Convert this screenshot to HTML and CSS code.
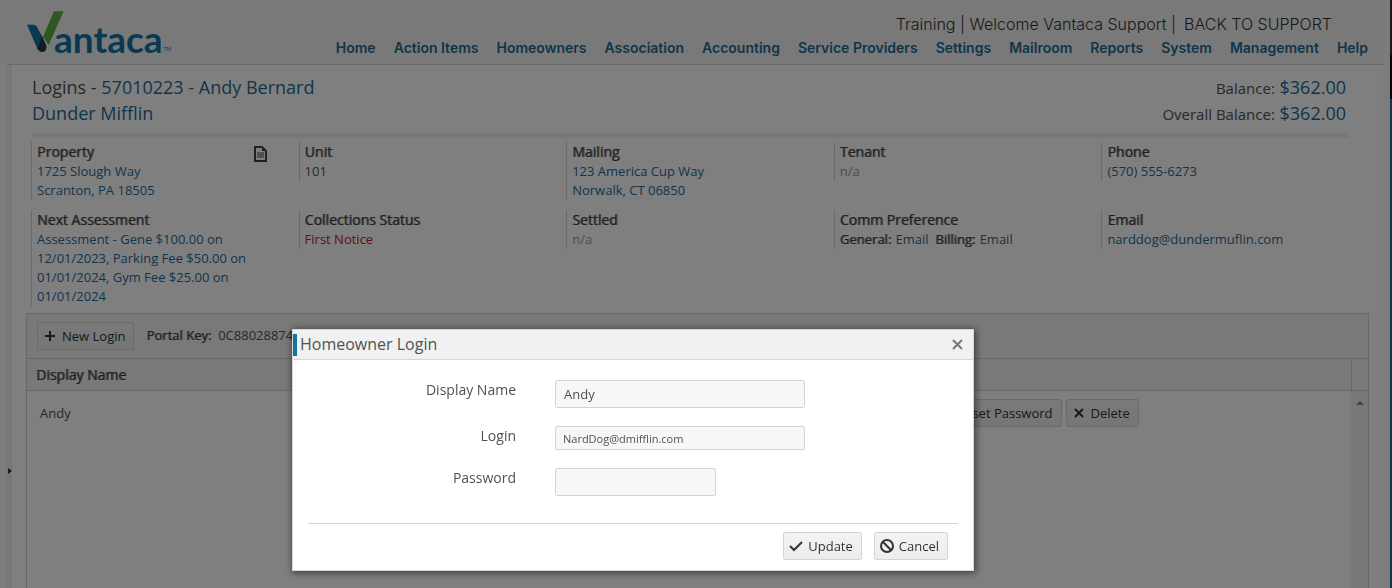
FILE: index.html
```html
<!DOCTYPE html>
<html lang="en">
<head>
<meta charset="utf-8">
<title>Vantaca - Logins</title>
<link rel="stylesheet" href="styles.css">
</head>
<body>
<div class="app">
  <div class="main">
    <header class="header">
      <a class="logo" href="#" aria-label="Vantaca">
        <svg class="logo-mark" viewBox="80 35 110 125" aria-hidden="true">
          <path d="M160 36H189L144 137L128 112Z" fill="#5eae42"/>
          <path d="M80 76H100Q106 76 109 82L126 112L112 150Z" fill="#1273a5"/>
          <path d="M125 110L137 137Q141 157 125 157Q115 157 111 146Z" fill="#1c384c"/>
        </svg>
        <span class="logo-text">antaca</span><span class="logo-tm">TM</span>
      </a>
      <div class="header-right">
        <div class="user-bar"><span>Training | Welcome Vantaca Support |</span><a href="#">BACK TO SUPPORT</a></div>
        <nav class="nav">
          <a href="#">Home</a><a href="#">Action Items</a><a href="#">Homeowners</a><a href="#">Association</a><a href="#">Accounting</a><a href="#">Service Providers</a><a href="#">Settings</a><a href="#">Mailroom</a><a href="#">Reports</a><a href="#">System</a><a href="#">Management</a><a href="#">Help</a>
        </nav>
      </div>
    </header>
    <div class="workspace">
      <div class="splitter"><svg viewBox="0 0 4 6" aria-hidden="true"><path d="M0 0L4 3L0 6Z"/></svg></div>
      <main class="content">
        <section class="summary">
          <div class="title">
            <div>Logins - <a href="#">57010223 - Andy Bernard</a></div>
            <div><a href="#">Dunder Mifflin</a></div>
          </div>
          <div class="balances">
            <div><span>Balance:</span> <a href="#">$362.00</a></div>
            <div><span>Overall Balance:</span> <a href="#">$362.00</a></div>
          </div>
        </section>
        <section class="facts">
          <div class="fact"><h2>Property <svg class="doc" viewBox="0 0 13 16" aria-hidden="true"><path d="M1 1H8L12 5V15H1Z" fill="none" stroke="currentColor" stroke-width="2"/><path d="M8 1V5H12Z" fill="currentColor"/><path d="M3 7H10M3 9H10M3 11H10" stroke="currentColor"/></svg></h2><a href="#">1725 Slough Way<br>Scranton, PA 18505</a></div>
          <div class="fact"><h2>Unit</h2>101</div>
          <div class="fact"><h2>Mailing</h2><a href="#">123 America Cup Way<br>Norwalk, CT 06850</a></div>
          <div class="fact"><h2>Tenant</h2><span class="muted">n/a</span></div>
          <div class="fact"><h2>Phone</h2><a href="#">(570) 555-6273</a></div>
          <div class="fact"><h2>Next Assessment</h2><a href="#">Assessment - Gene $100.00 on 12/01/2023, Parking Fee $50.00 on 01/01/2024, Gym Fee $25.00 on 01/01/2024</a></div>
          <div class="fact"><h2>Collections Status</h2><span class="alert">First Notice</span></div>
          <div class="fact"><h2>Settled</h2><span class="muted">n/a</span></div>
          <div class="fact"><h2>Comm Preference</h2><b>General:</b> <a href="#">Email</a> &nbsp;<b>Billing:</b> <a href="#">Email</a></div>
          <div class="fact"><h2>Email</h2><a href="#">narddog@dundermuflin.com</a></div>
        </section>
        <section class="panel">
          <div class="toolbar">
            <button class="btn" type="button"><svg viewBox="0 0 14 14" aria-hidden="true"><path d="M7 2V12M2 7H12"/></svg>New Login</button>
            <div class="portal"><b>Portal Key:</b><span>0C88028874</span></div>
          </div>
          <div class="grid-area">
            <table class="grid">
              <colgroup><col class="col-name"><col></colgroup>
              <thead><tr><th>Display Name</th><th></th></tr></thead>
              <tbody><tr><td>Andy</td><td><div class="row-actions">
                <button class="btn" type="button"><svg viewBox="0 0 14 14" aria-hidden="true"><path d="M12 7A5 5 0 1 1 10 3M7 3H11V0"/></svg>Reset Password</button>
                <button class="btn" type="button"><svg viewBox="0 0 14 14" aria-hidden="true"><path d="M3 3L11 11M11 3L3 11"/></svg>Delete</button>
              </div></td></tr></tbody>
            </table>
            <div class="scroll"><div class="scroll-head"></div><div class="scroll-track"><svg viewBox="0 0 8 4" aria-hidden="true"><path d="M0 4L4 0L8 4Z"/></svg></div></div>
          </div>
        </section>
      </main>
    </div>
  </div>
  <div class="edge"></div>
</div>
<div class="overlay">
  <dialog class="dialog" open aria-labelledby="dialog-title">
    <div class="dialog-head">
      <h1 id="dialog-title">Homeowner Login</h1>
      <button class="close" type="button" aria-label="Close"><svg viewBox="0 0 11 11" aria-hidden="true"><path d="M1 1L10 10M10 1L1 10"/></svg></button>
    </div>
    <form class="form">
      <div class="field"><label for="display-name">Display Name</label><input id="display-name" type="text" value="Andy"></div>
      <div class="field"><label for="login">Login</label><input class="compact" id="login" type="text" value="NardDog@dmifflin.com"></div>
      <div class="field"><label for="password">Password</label><input class="short" id="password" type="password"></div>
      <div class="form-actions">
        <button class="btn" type="button"><svg viewBox="0 0 14 14" aria-hidden="true"><path d="M1 7L5 11L13 3"/></svg>Update</button>
        <button class="btn" type="button"><svg viewBox="0 0 14 14" aria-hidden="true"><circle cx="7" cy="7" r="6"/><path d="M3 3L11 11"/></svg>Cancel</button>
      </div>
    </form>
  </dialog>
</div>
</body>
</html>
```

FILE: styles.css
```css
* { box-sizing: border-box; }
body {
  margin: 0;
  font: 13px/19px "Open Sans", sans-serif;
  color: #515151;
  background: #f8f8f8;
  overflow: hidden;
}
a { color: #1f6a96; text-decoration: none; }
h1, h2 { margin: 0; font-weight: 400; }
b, h2, th { font-weight: 400; color: #424242; text-shadow: 1px 0 rgba(66, 66, 66, 0.6); }

.app { display: flex; min-height: 100vh; }
.main { flex: 1; min-width: 0; display: flex; flex-direction: column; }
.edge { width: 2px; background: linear-gradient(#333 0 55px, #080808 55px 99px, #12709f 99px); }

.header {
  display: flex;
  justify-content: space-between;
  height: 65px;
  margin-right: 7px;
  padding-left: 27px;
  background: linear-gradient(#d0d0d0, #d0d0d0) 7px 100% / 100% 1px no-repeat #f3f3f3;
}
.logo { display: flex; color: #1273a5; font-family: Lato, sans-serif; padding-top: 11px; }
.logo-mark { width: 37px; height: 42px; }
.logo-text { font-size: 37px; line-height: 56px; font-weight: 700; margin-left: -10px; }
.logo-tm { font-size: 5px; line-height: 76px; margin-left: 1px; }
.header-right { display: flex; flex-direction: column; align-items: flex-end; padding: 14px 15px 0 0; font-family: Inter, sans-serif; }
.user-bar { display: flex; gap: 8px; font-size: 16px; line-height: 20px; font-weight: 300; padding-right: 36px; color: #333; }
.user-bar a { color: #333; }
.nav { display: flex; gap: 18px; font-size: 14px; line-height: 20px; font-weight: 600; margin-top: 4px; }

.workspace { flex: 1; display: flex; padding: 0 7px; }
.splitter { width: 5px; background: #efefef; display: flex; padding-top: 403px; align-items: flex-start; }
.splitter svg { width: 4px; height: 6px; fill: #333; margin-left: 1px; }
.content { flex: 1; min-width: 0; display: flex; flex-direction: column; background: #fff; padding: 9px 14px 0 14px; }

.summary { display: flex; justify-content: space-between; margin: 0 20px 0 6px; padding: 0 3px 7px 0; border-bottom: 5px solid #f1f1f1; font-size: 18px; line-height: 26px; }
.balances { text-align: right; }
.balances span { font-size: 15px; line-height: 20px; }

.facts { display: grid; grid-template-columns: repeat(5, 1fr); align-items: start; row-gap: 10px; margin: 4px 0 7px 5px; }
.fact { border-left: 1px solid #d4d4d4; padding: 0 45px 0 5px; }
.fact:nth-child(5n) { padding-right: 0; }
.fact h2 { display: flex; justify-content: space-between; align-items: center; height: 20px; font-size: 14px; line-height: 20px; }
.doc { width: 13px; height: 16px; margin-right: -13px; margin-top: 4px; }
.fact b { margin-right: 1px; }
.muted { color: #999; }
.alert { color: #c4161c; }

.panel { flex: 1; display: flex; flex-direction: column; border: 1px solid #d0d0d0; border-bottom: 0; }
.toolbar { display: flex; align-items: flex-start; gap: 12px; padding: 8px 10px; height: 44px; background: #f3f3f3; }
.portal { display: flex; gap: 7px; line-height: 26px; }
.btn {
  display: inline-flex;
  align-items: center;
  gap: 5px;
  height: 28px;
  padding: 0 8px 0 5px;
  border: 1px solid #d5d5d5;
  border-radius: 2px;
  background: linear-gradient(#f3f3f3, #ececec);
  font: 13px/19px "Open Sans", sans-serif;
  color: #333;
}
.btn svg { width: 14px; height: 14px; fill: none; stroke: currentColor; stroke-width: 2; }

.grid-area { flex: 1; display: flex; }
.grid { flex: 1; align-self: flex-start; table-layout: fixed; border-collapse: collapse; }
.col-name { width: 67%; }
.grid th { height: 32px; padding: 0 9px; text-align: left; font-size: 14px; background: #f3f3f3; border: solid #d0d0d0; border-width: 1px 0; }
.grid td { height: 45px; padding: 0 13px; }
.grid td:last-child { padding-left: 18px; }
.row-actions { display: flex; gap: 4px; }
.scroll { width: 17px; display: flex; flex-direction: column; }
.scroll-head { height: 33px; background: #f3f3f3; border: 1px solid #d0d0d0; border-right: 0; }
.scroll-track { flex: 1; background: #f1f1f1; text-align: center; }
.scroll-track svg { width: 8px; height: 4px; fill: #888; }

.overlay { position: fixed; inset: 0; background: rgba(0, 0, 0, 0.5); }
.dialog {
  position: absolute;
  top: 329px;
  left: 292px;
  margin: 0;
  width: 682px;
  padding: 0;
  border: 1px solid #d5d5d5;
  background: #fff;
  color: #515151;
  box-shadow: 1px 1px 7px 1px rgba(0, 0, 0, 0.5);
}
.dialog-head { display: flex; justify-content: space-between; align-items: center; height: 30px; padding-right: 10px; background: #f1f1f1; border-bottom: 1px solid #d5d5d5; }
.dialog-head h1 { font-size: 16px; line-height: 20px; padding: 0 0 2px 3px; border-left: 4px solid #1273a5; }
.close { display: flex; padding: 0; border: 0; background: none; color: #777; }
.close svg { width: 11px; height: 11px; stroke: currentColor; stroke-width: 2; }
.form { padding: 20px 15px 10px; }
.field { display: flex; align-items: flex-start; gap: 39px; margin-bottom: 18px; }
.field label { width: 208px; text-align: right; font-size: 14px; line-height: 20px; }
.field input { width: 250px; height: 28px; padding: 0 8px; border: 1px solid #d5d5d5; border-radius: 2px; background: #f7f7f7; font: 13px "Open Sans", sans-serif; color: #515151; }
.field .compact { height: 24px; padding: 0 7px; font-size: 11px; }
.field .short { width: 161px; }
.form-actions { display: flex; justify-content: flex-end; gap: 12px; margin-top: 27px; padding: 8px 10px 0 0; border-top: 1px solid #d5d5d5; }
```
